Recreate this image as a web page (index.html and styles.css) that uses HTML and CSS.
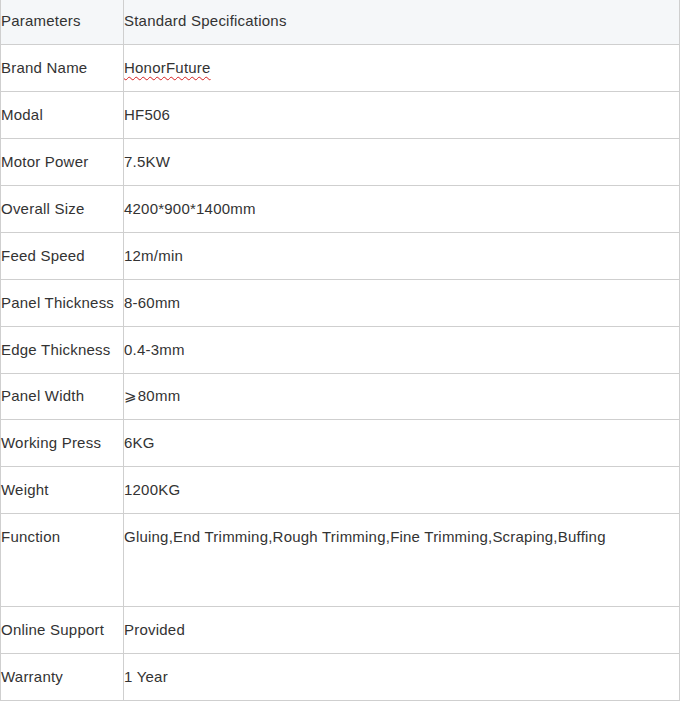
FILE: index.html
```html
<!DOCTYPE html>
<html lang="en">
<head>
<meta charset="utf-8">
<title>Standard Specifications</title>
<link rel="stylesheet" href="styles.css">
</head>
<body>
<div class="spec">
  <div class="row head"><div class="key">Parameters</div><div class="val">Standard Specifications</div></div>
  <div class="row"><div class="key">Brand Name</div><div class="val"><span class="spell">HonorFuture</span></div></div>
  <div class="row"><div class="key">Modal</div><div class="val">HF506</div></div>
  <div class="row"><div class="key">Motor Power</div><div class="val">7.5KW</div></div>
  <div class="row"><div class="key">Overall Size</div><div class="val">4200*900*1400mm</div></div>
  <div class="row"><div class="key">Feed Speed</div><div class="val">12m/min</div></div>
  <div class="row"><div class="key">Panel Thickness</div><div class="val">8-60mm</div></div>
  <div class="row"><div class="key">Edge Thickness</div><div class="val">0.4-3mm</div></div>
  <div class="row short"><div class="key">Panel Width</div><div class="val"><span class="sym">⩾</span>80mm</div></div>
  <div class="row"><div class="key">Working Press</div><div class="val">6KG</div></div>
  <div class="row"><div class="key">Weight</div><div class="val">1200KG</div></div>
  <div class="row tall"><div class="key">Function</div><div class="val">Gluing,End Trimming,Rough Trimming,Fine Trimming,Scraping,Buffing</div></div>
  <div class="row"><div class="key">Online Support</div><div class="val">Provided</div></div>
  <div class="row"><div class="key">Warranty</div><div class="val">1 Year</div></div>
</div>
</body>
</html>
```
FILE: styles.css
```css
html, body {
  margin: 0;
  padding: 0;
  background: #fff;
}
body {
  font-family: "Liberation Sans", Arial, sans-serif;
  font-size: 15px;
  letter-spacing: 0.22px;
  color: #333;
}
.spec {
  width: 680px;
  box-sizing: border-box;
  border-left: 1px solid #cfcfcf;
  border-right: 1px solid #cfcfcf;
}
.row {
  display: flex;
  height: 47px;
  box-sizing: border-box;
  border-bottom: 1px solid #cfcfcf;
  line-height: 18px;
}
.row.head {
  height: 45px;
  background: #f5f7f9;
}
.row.short {
  height: 46px;
}
.row.tall {
  height: 93px;
}
.key {
  width: 122px;
  flex: none;
  border-right: 1px solid #cfcfcf;
  padding-top: 14px;
  white-space: nowrap;
}
.val {
  flex: 1;
  padding-top: 14px;
  white-space: nowrap;
}
.row.head .key,
.row.head .val {
  padding-top: 12px;
}
.row.short .key,
.row.short .val {
  padding-top: 13px;
}
.spell {
  text-decoration: underline wavy #d42020;
  text-decoration-thickness: 1px;
  text-underline-offset: 3px;
}
.sym {
  font-family: "DejaVu Sans", sans-serif;
  font-size: 15px;
  margin-right: 1px;
}
```
